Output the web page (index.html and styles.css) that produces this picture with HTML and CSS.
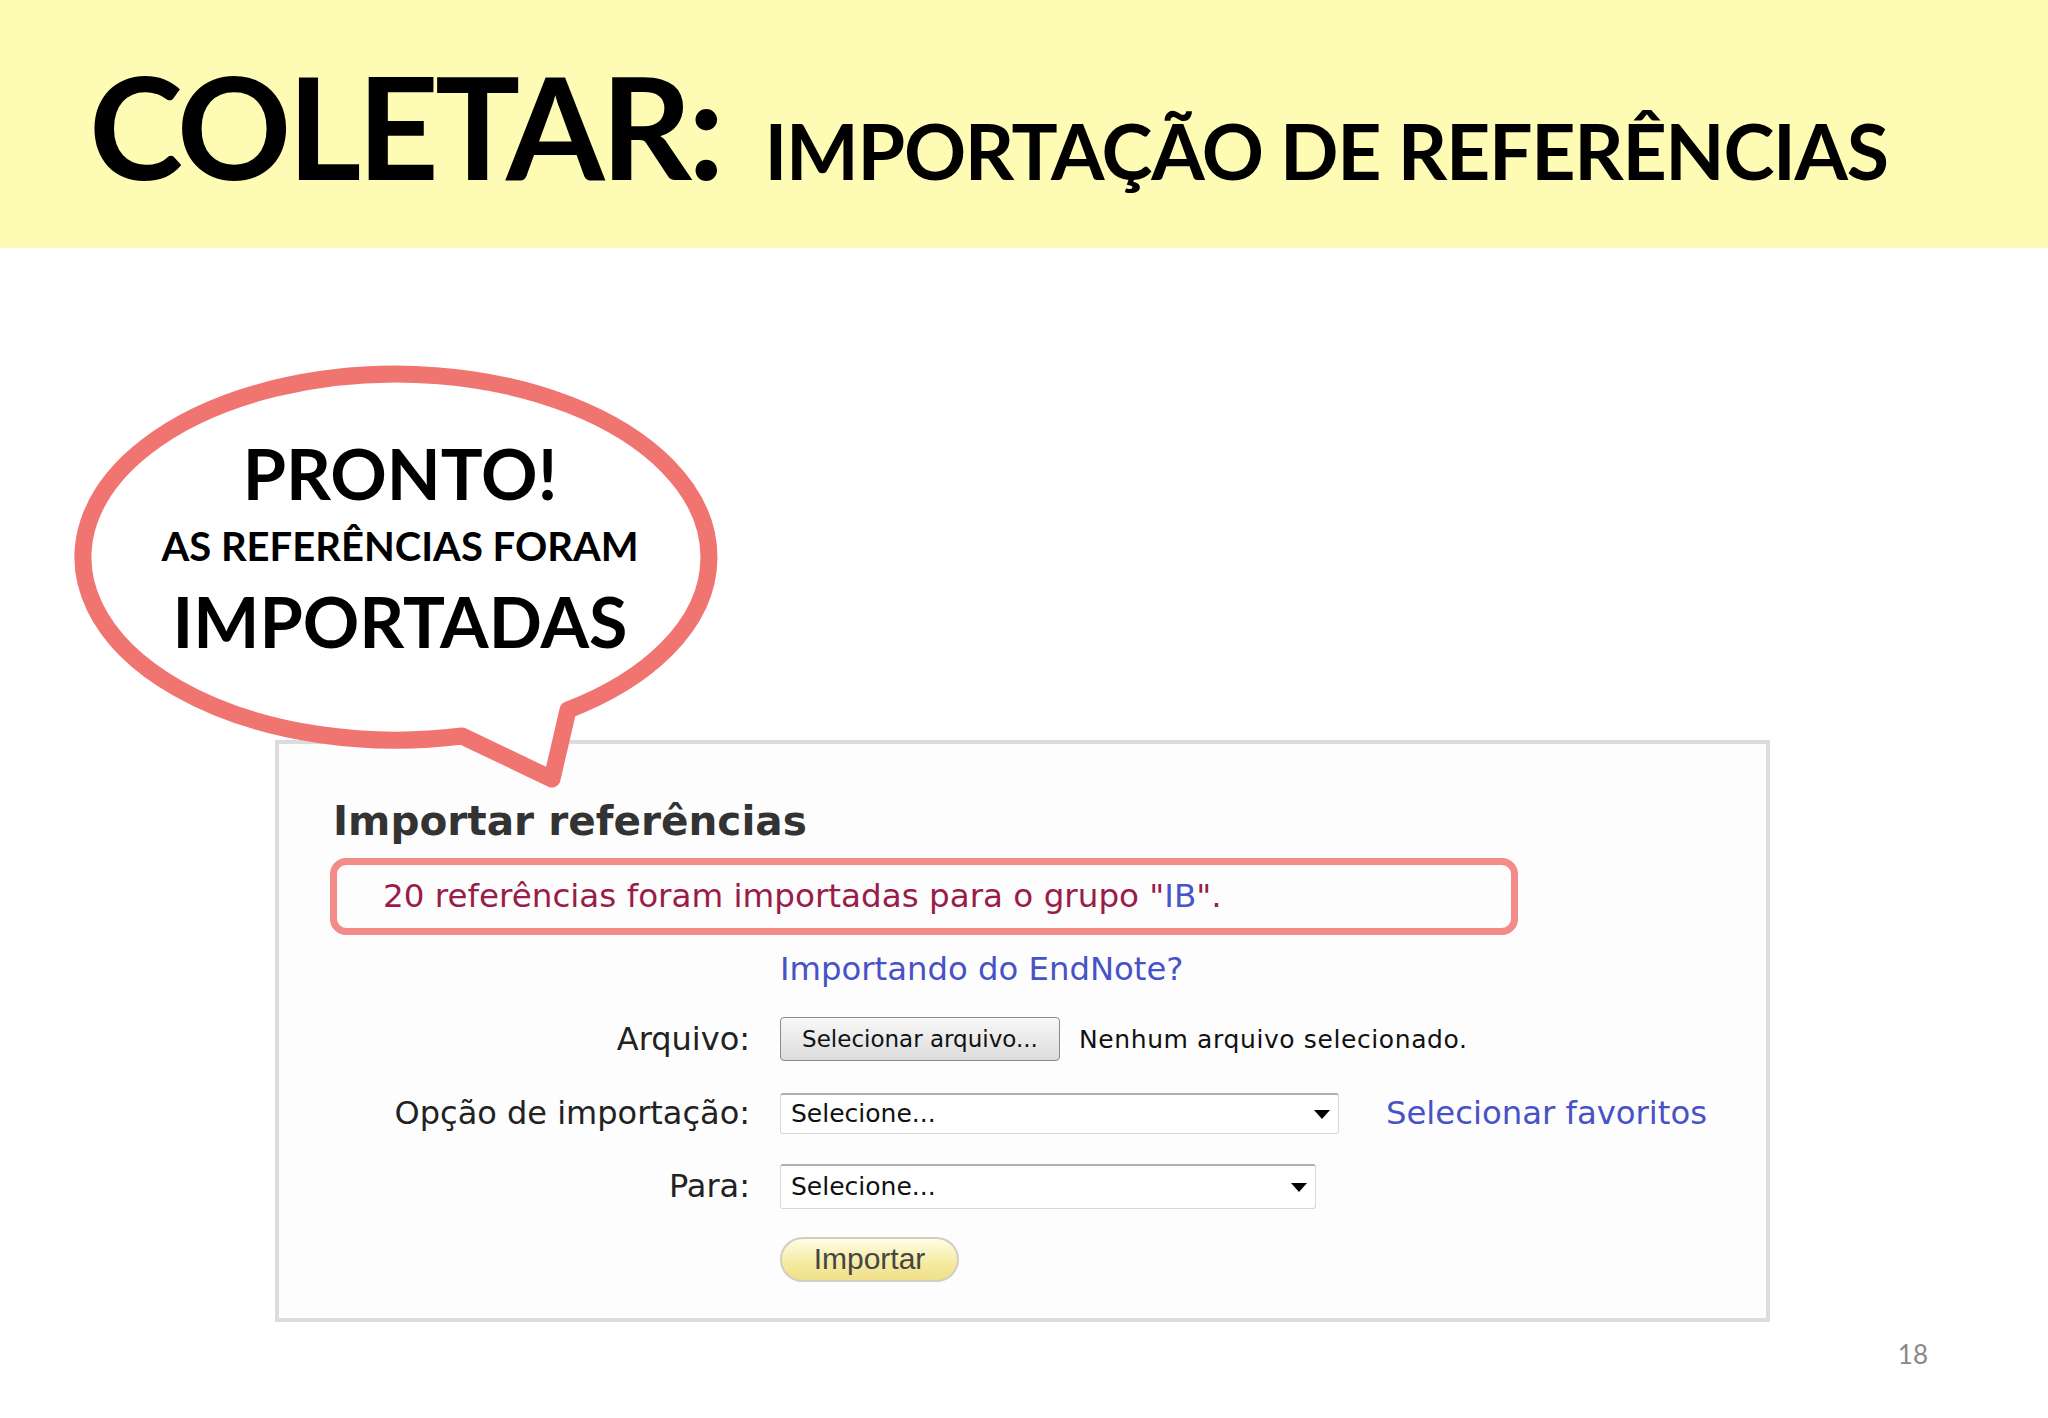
FILE: index.html
```html
<!DOCTYPE html>
<html lang="pt-BR">
<head>
    <meta charset="UTF-8">
    <title>Coletar: importação de referências</title>
    <link rel="stylesheet" href="styles.css">
</head>
<body>
    <div class="slide">
        <div class="header">
            <span class="title-main">COLETAR:</span>
            <span class="title-sub">IMPORTAÇÃO DE REFERÊNCIAS</span>
        </div>

        <div class="panel">
            <h2 class="panel-title">Importar referências</h2>
            <div class="notice">20 referências foram importadas para o grupo "<span class="notice-group">IB</span>".</div>

            <div class="form">
                <div class="label"></div>
                <div class="field"><a class="link">Importando do EndNote?</a></div>

                <div class="label">Arquivo:</div>
                <div class="field">
                    <button class="file-button">Selecionar arquivo...</button>
                    <span class="file-name">Nenhum arquivo selecionado.</span>
                </div>

                <div class="label">Opção de importação:</div>
                <div class="field">
                    <div class="select select-wide">Selecione...</div>
                    <a class="link link-fav">Selecionar favoritos</a>
                </div>

                <div class="label">Para:</div>
                <div class="field">
                    <div class="select select-narrow">Selecione...</div>
                </div>

                <div class="label"></div>
                <div class="field"><button class="import-button">Importar</button></div>
            </div>
        </div>

        <div class="footer">
            <span class="page-number">18</span>
        </div>

        <div class="callout">
            <svg class="callout-shape" viewBox="0 0 660 440" width="660" height="440">
                <path d="M392 378 L482 421 L498 352 A313 183 0 1 0 392 378 Z"></path>
            </svg>
            <div class="callout-text">
                <div class="callout-big">PRONTO!</div>
                <div class="callout-small">AS REFERÊNCIAS FORAM</div>
                <div class="callout-big">IMPORTADAS</div>
            </div>
        </div>
    </div>
</body>
</html>
```

FILE: styles.css
```css
* {
    margin: 0;
    padding: 0;
    box-sizing: border-box;
}

body {
    background: #ffffff;
}

.slide {
    position: relative;
    width: 2048px;
    height: 1418px;
    overflow: hidden;
    background: #ffffff;
}

/* yellow title bar */
.header {
    height: 248px;
    background: #fefcb4;
    display: flex;
    align-items: baseline;
    padding: 54px 0 0 89px;
    font-family: Lato, "Open Sans", sans-serif;
    font-weight: 700;
    color: #000000;
}

.title-main {
    font-size: 142px;
    line-height: 142px;
    letter-spacing: -4px;
}

.title-sub {
    font-size: 77px;
    line-height: 77px;
    letter-spacing: -1.3px;
    margin-left: 44px;
}

/* screenshot of the import form */
.panel {
    width: 1495px;
    height: 582px;
    margin: 492px 0 0 275px;
    border: 4px solid #dcdcdc;
    background: #fdfdfd;
    padding: 53px 0 0 51px;
    font-family: "DejaVu Sans", Verdana, sans-serif;
}

.panel-title {
    font-size: 40.6px;
    line-height: 48px;
    font-weight: 700;
    color: #333333;
    margin: 0 0 13px 3px;
}

.notice {
    width: 1188px;
    height: 77px;
    border: 7px solid #f38b88;
    border-radius: 16px;
    padding-left: 46px;
    font-size: 32.6px;
    line-height: 63px;
    color: #9a1c48;
}

.notice-group {
    color: #4a55c8;
}

.form {
    display: grid;
    grid-template-columns: 420px auto;
    grid-template-rows: 67px 74px 74px 72px 74px;
    column-gap: 30px;
    align-items: center;
}

.label {
    text-align: right;
    font-size: 32px;
    color: #222222;
}

.field {
    display: flex;
    align-items: center;
}

.link {
    font-size: 32.3px;
    color: #4752c6;
    cursor: pointer;
}

.link-fav {
    margin-left: 47px;
}

.file-button {
    width: 280px;
    height: 44px;
    border: 1px solid #8a8a8a;
    border-radius: 4px;
    background: linear-gradient(#f8f8f8, #dcdcdc);
    font-family: "DejaVu Sans", Verdana, sans-serif;
    font-size: 23px;
    color: #111111;
}

.file-name {
    margin-left: 19px;
    font-size: 25px;
    letter-spacing: 0.6px;
    color: #111111;
}

.select {
    position: relative;
    background: #ffffff;
    border: 1px solid #d8d8d8;
    border-top: 2px solid #b0b0b0;
    border-radius: 3px;
    padding-left: 10px;
    font-size: 25px;
    color: #111111;
    display: flex;
    align-items: center;
}

.select::after {
    content: "";
    position: absolute;
    right: 8px;
    top: 50%;
    margin-top: -4px;
    border-left: 8px solid transparent;
    border-right: 8px solid transparent;
    border-top: 9px solid #000000;
}

.select-wide {
    width: 559px;
    height: 41px;
}

.select-narrow {
    width: 536px;
    height: 45px;
}

.import-button {
    width: 179px;
    height: 45px;
    border: 2px solid #cfcfc4;
    border-radius: 23px;
    background: linear-gradient(#fffde6, #f5eaa0 60%, #efe08a);
    font-family: "Liberation Sans", Arial, sans-serif;
    font-size: 30px;
    color: #454545;
}

.footer {
    display: flex;
    justify-content: flex-end;
    padding-right: 120px;
    margin-top: 19px;
}

.page-number {
    font-family: Lato, sans-serif;
    font-size: 26px;
    line-height: 26px;
    color: #898989;
}

/* speech bubble laid over the slide */
.callout {
    position: absolute;
    left: 70px;
    top: 358px;
    width: 660px;
    height: 440px;
    text-align: center;
    font-family: Lato, "Open Sans", sans-serif;
    font-weight: 700;
    color: #000000;
}

.callout-shape {
    position: absolute;
    left: 0;
    top: 0;
    overflow: visible;
}

.callout-shape path {
    fill: #ffffff;
    stroke: #f07470;
    stroke-width: 17;
    stroke-linejoin: round;
}

.callout-text {
    position: relative;
    padding-top: 80px;
}

.callout-big {
    font-size: 70px;
    line-height: 70px;
}

.callout-small {
    font-size: 40px;
    line-height: 40px;
    margin: 18px 0 20px;
}
```
